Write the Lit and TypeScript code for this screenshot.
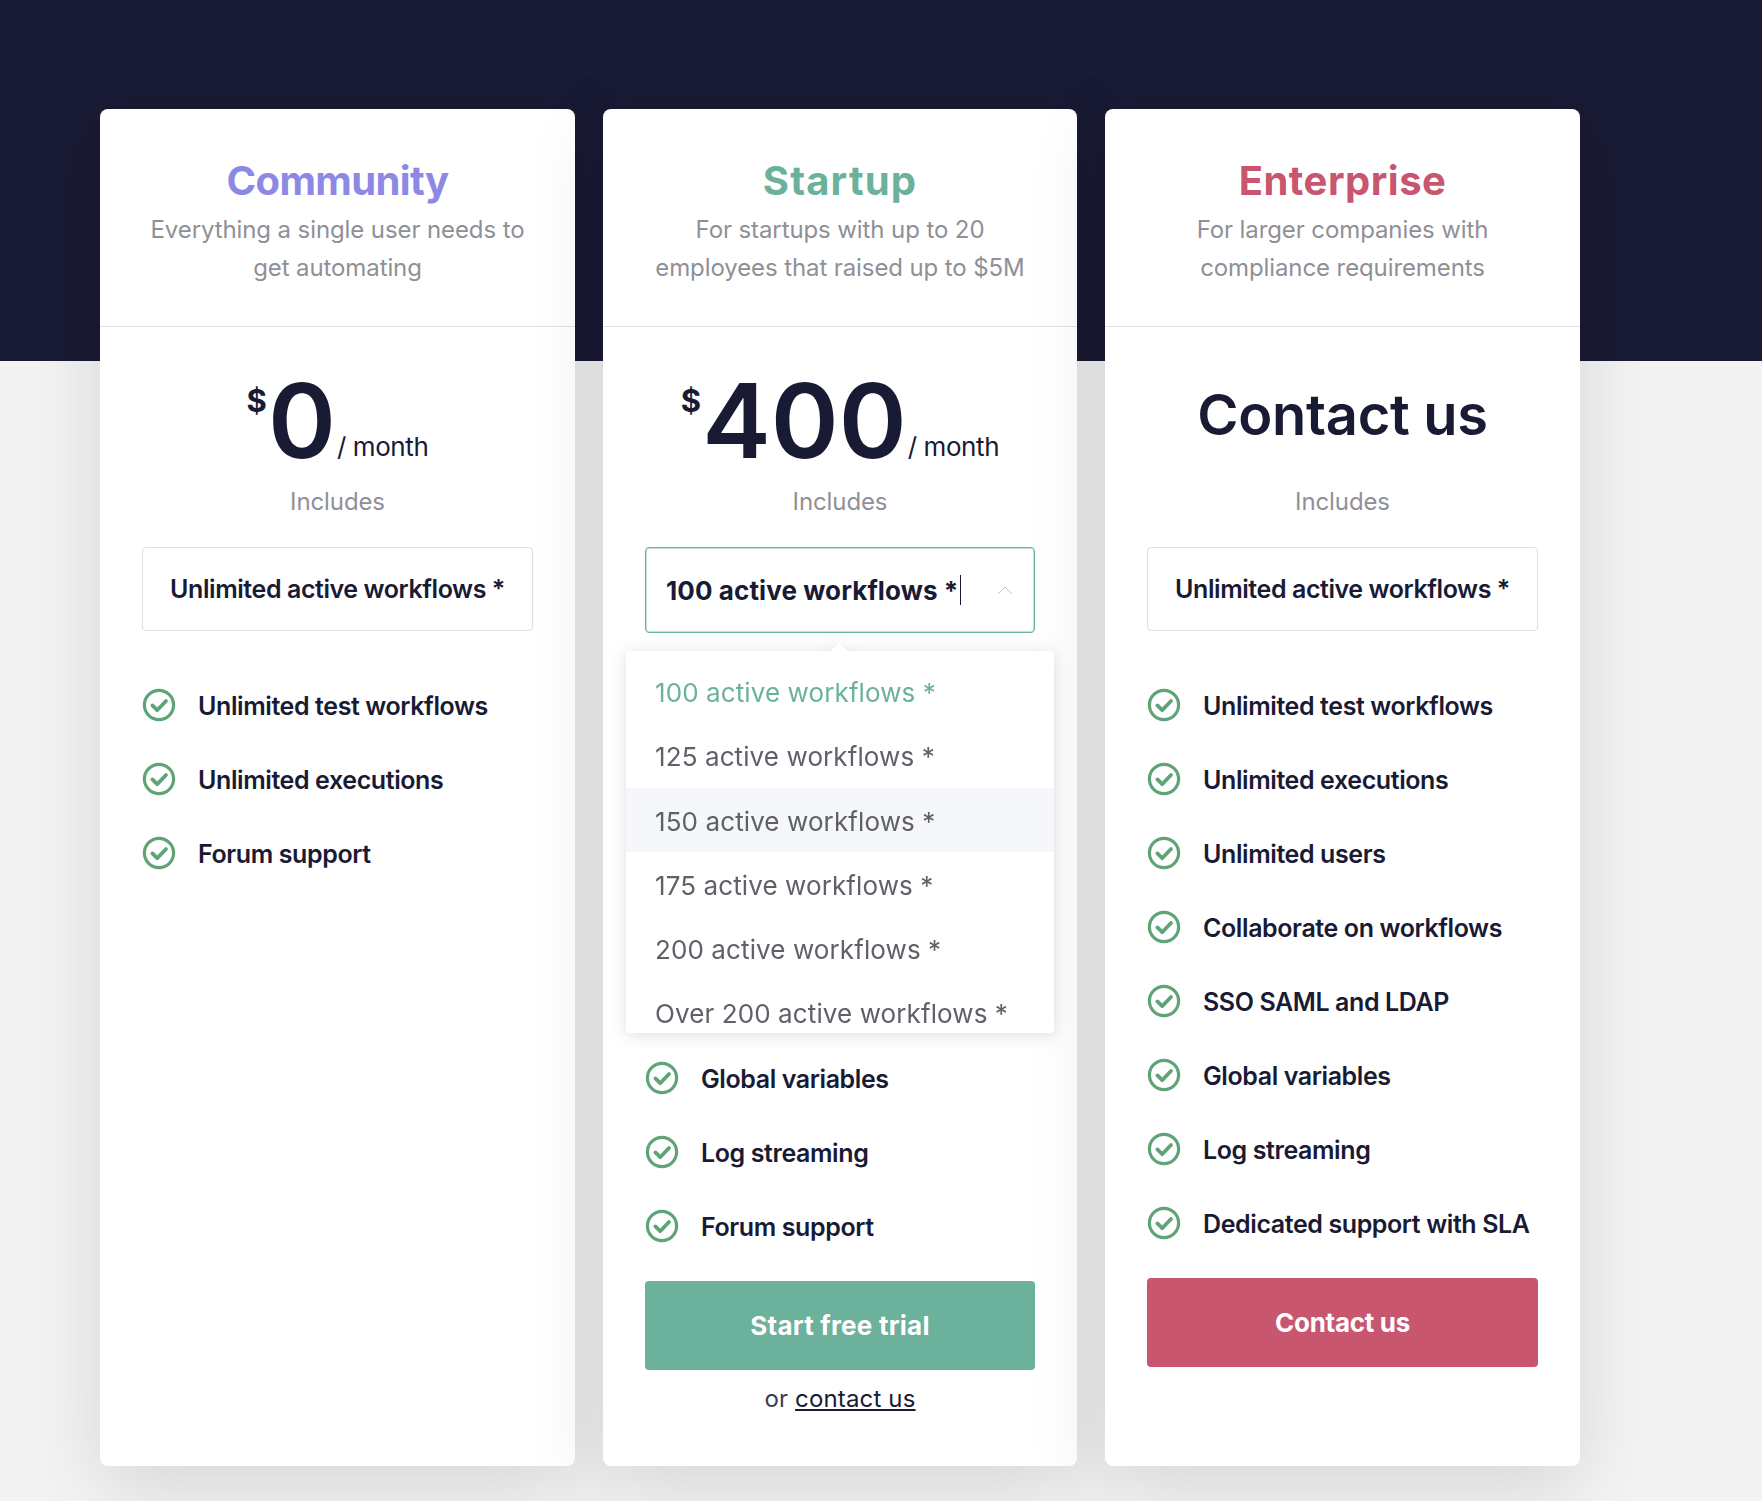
import { LitElement, html, css } from "lit";
import { customElement } from "lit/decorators.js";

interface Plan {
  name: string;
  tone: string;
  desc: string[];
  amount?: string;
  contact?: boolean;
  select: string;
  open?: boolean;
  features: string[];
  cta?: string;
  or?: boolean;
}

const PLANS: Plan[] = [
  {
    name: "Community",
    tone: "violet",
    desc: ["Everything a single user needs to", "get automating"],
    amount: "0",
    select: "Unlimited active workflows *",
    features: ["Unlimited test workflows", "Unlimited executions", "Forum support"],
  },
  {
    name: "Startup",
    tone: "green",
    desc: ["For startups with up to 20", "employees that raised up to $5M"],
    amount: "400",
    select: "100 active workflows *",
    open: true,
    features: ["Global variables", "Log streaming", "Forum support"],
    cta: "Start free trial",
    or: true,
  },
  {
    name: "Enterprise",
    tone: "rose",
    desc: ["For larger companies with", "compliance requirements"],
    contact: true,
    select: "Unlimited active workflows *",
    features: [
      "Unlimited test workflows",
      "Unlimited executions",
      "Unlimited users",
      "Collaborate on workflows",
      "SSO SAML and LDAP",
      "Global variables",
      "Log streaming",
      "Dedicated support with SLA",
    ],
    cta: "Contact us",
  },
];

const OPTIONS = [
  "100 active workflows *",
  "125 active workflows *",
  "150 active workflows *",
  "175 active workflows *",
  "200 active workflows *",
  "Over 200 active workflows *",
];

const check = html`<svg class="check" viewBox="0 0 34 34" aria-hidden="true">
  <circle cx="17" cy="17" r="14.6" fill="none" stroke="#5fa476" stroke-width="3.2"></circle>
  <path d="M10.4 17.4l4.8 4.8 8.8-9.2" fill="none" stroke="#5fa476" stroke-width="3.8" stroke-linecap="round" stroke-linejoin="round"></path>
</svg>`;

@customElement("app-root")
export class AppRoot extends LitElement {
  static styles = css`
    :host {
      display: block;
      height: 1501px;
      overflow: hidden;
      background: linear-gradient(#191a33 361px, #f3f3f4 361px);
      font-family: Inter, "Liberation Sans", sans-serif;
      color: #191a33;
    }
    .plans {
      display: grid;
      grid-template-columns: 475px 474px 475px;
      column-gap: 28px;
      padding: 109px 0 0 100px;
    }
    .card {
      height: 1357px;
      background: #fff;
      border-radius: 8px;
      box-shadow: 0 20px 80px rgba(0, 0, 0, 0.12);
      display: flex;
      flex-direction: column;
    }
    .head {
      height: 218px;
      box-sizing: border-box;
      border-bottom: 1px solid #e2e3ea;
      padding-top: 48px;
      text-align: center;
    }
    .name {
      font-size: 40px;
      line-height: 48px;
      font-weight: 700;
    }
    .violet .name { color: #8c89e4; letter-spacing: -0.6px; }
    .green .name { color: #6bb19c; letter-spacing: 1.2px; }
    .rose .name { color: #c8566f; letter-spacing: 0.5px; }
    .desc {
      margin-top: 6px;
      font-size: 24px;
      line-height: 38px;
      color: #8f9097;
      letter-spacing: -0.1px;
    }
    .body {
      flex: 1;
      padding: 0 42px;
      display: flex;
      flex-direction: column;
    }
    .price {
      height: 158px;
      display: flex;
      justify-content: center;
      align-items: flex-start;
      white-space: nowrap;
    }
    .cur {
      font-size: 31px;
      font-weight: 700;
      line-height: 40px;
      margin-top: 54px;
      margin-right: 1px;
    }
    .amount {
      font-size: 103px;
      line-height: 124px;
      font-weight: 600;
      margin-top: 32px;
    }
    .per {
      font-size: 26px;
      line-height: 32px;
      margin: 104px 0 0 1px;
      letter-spacing: -0.4px;
    }
    .contact {
      font-size: 56px;
      font-weight: 600;
      line-height: 66px;
      margin-top: 55px;
      letter-spacing: -0.3px;
    }
    .includes {
      font-size: 24px;
      line-height: 34px;
      text-align: center;
      color: #8f9097;
      letter-spacing: -0.1px;
    }
    .select {
      position: relative;
      z-index: 2;
      margin-top: 28px;
    }
    .box {
      height: 84px;
      box-sizing: border-box;
      border: 1px solid #dcdfe6;
      border-radius: 4px;
      display: flex;
      align-items: center;
      justify-content: center;
      font-size: 25px;
      font-weight: 600;
      letter-spacing: -0.42px;
      white-space: nowrap;
    }
    .box.open {
      height: 86px;
      justify-content: flex-start;
      border: 1px solid #6bb19c;
      box-shadow: inset 0 0 0 1px rgba(107, 177, 156, 0.4);
      padding-left: 20px;
      font-size: 26px;
      font-weight: 700;
      letter-spacing: 0.1px;
    }
    .caret {
      width: 1px;
      height: 30px;
      background: #191a33;
      margin-left: 2px;
    }
    .chev {
      width: 16px;
      height: 9px;
      margin-left: auto;
      margin-right: 21px;
    }
    .pop {
      position: absolute;
      left: -19px;
      right: -19px;
      top: 104px;
      height: 382px;
      background: #fff;
      border-radius: 4px;
      filter: drop-shadow(0 2px 8px rgba(0, 0, 0, 0.13));
    }
    .pop::before {
      content: "";
      position: absolute;
      left: 207px;
      top: -6px;
      width: 12px;
      height: 12px;
      background: #fff;
      transform: rotate(45deg);
    }
    .options {
      position: relative;
      height: 100%;
      overflow: hidden;
      padding-top: 8px;
      box-sizing: border-box;
      border-radius: 4px;
    }
    .opt {
      height: 64.3px;
      line-height: 68px;
      padding-left: 29px;
      font-size: 26px;
      color: #606068;
      letter-spacing: 0.1px;
      white-space: nowrap;
    }
    .opt.sel { color: #6bb19c; }
    .opt.hot { background: #f5f7fa; }
    .features {
      margin-top: 57px;
      display: flex;
      flex-direction: column;
      gap: 40px;
    }
    .covered {
      height: 330px;
      margin-top: 1px;
    }
    .row {
      height: 34px;
      display: flex;
      align-items: center;
      gap: 22px;
      font-size: 25px;
      font-weight: 600;
      letter-spacing: -0.4px;
      white-space: nowrap;
    }
    .row span { position: relative; top: 1px; }
    .check {
      width: 34px;
      height: 34px;
      flex: none;
    }
    .cta {
      margin-top: 38px;
      height: 89px;
      display: flex;
      align-items: center;
      justify-content: center;
      border-radius: 4px;
      color: #fff;
      font-size: 26px;
      font-weight: 700;
    }
    .green .cta { background: #6bb19c; letter-spacing: 0.25px; }
    .rose .cta { background: #c8566f; letter-spacing: -0.3px; }
    .or {
      margin-top: 12px;
      text-align: center;
      font-size: 24px;
      line-height: 34px;
      color: #3b3c52;
      letter-spacing: 0.15px;
    }
    .or a {
      color: #191a33;
      text-decoration: underline;
    }
  `;

  render() {
    return html`<div class="plans">${PLANS.map((p) => this.card(p))}</div>`;
  }

  private card(p: Plan) {
    return html`<section class="card ${p.tone}">
      <header class="head">
        <div class="name">${p.name}</div>
        <div class="desc">${p.desc[0]}<br />${p.desc[1]}</div>
      </header>
      <div class="body">
        <div class="price">
          ${p.contact
            ? html`<div class="contact">Contact us</div>`
            : html`<span class="cur">$</span><span class="amount">${p.amount}</span><span class="per">/ month</span>`}
        </div>
        <div class="includes">Includes</div>
        <div class="select">
          ${p.open
            ? html`<div class="box open">
                  ${p.select}<span class="caret"></span>
                  <svg class="chev" viewBox="0 0 16 9" aria-hidden="true">
                    <path d="M1 8l7-7 7 7" fill="none" stroke="#c0c4cc" stroke-width="1"></path>
                  </svg>
                </div>
                <div class="pop">
                  <div class="options">
                    ${OPTIONS.map(
                      (o, i) => html`<div class="opt ${i === 0 ? "sel" : ""} ${i === 2 ? "hot" : ""}">${o}</div>`
                    )}
                  </div>
                </div>`
            : html`<div class="box">${p.select}</div>`}
        </div>
        <div class="features">
          ${p.open ? html`<div class="covered"></div>` : ""}
          ${p.features.map((f) => html`<div class="row">${check}<span>${f}</span></div>`)}
        </div>
        ${p.cta ? html`<div class="cta">${p.cta}</div>` : ""}
        ${p.or ? html`<div class="or">or <a href="#">contact us</a></div>` : ""}
      </div>
    </section>`;
  }
}
